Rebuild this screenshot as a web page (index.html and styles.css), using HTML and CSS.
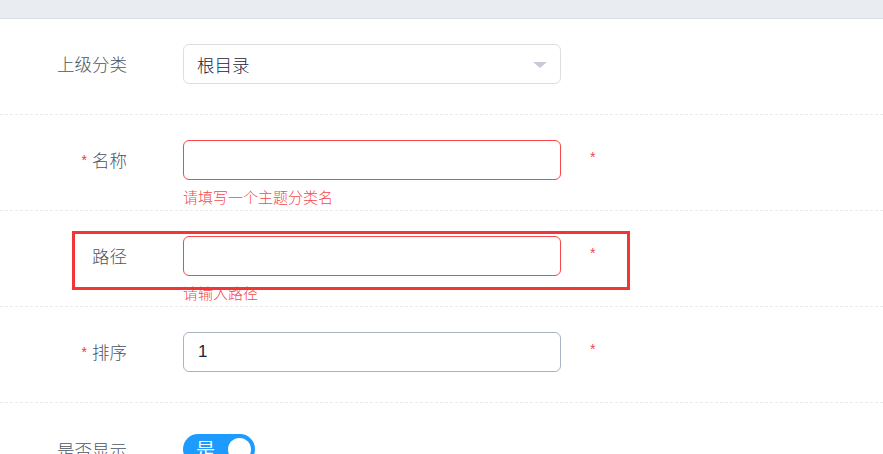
FILE: index.html
```html
<!DOCTYPE html>
<html lang="zh">
<head>
<meta charset="utf-8">
<link rel="stylesheet" href="styles.css">
</head>
<body>
<div class="topbar"></div>
<form class="form">
  <div class="row">
    <label class="label">上级分类</label>
    <div class="control">
      <div class="select">
        <span class="select-value">根目录</span>
        <span class="arrow"></span>
      </div>
    </div>
  </div>
  <div class="row">
    <label class="label"><span class="req">*</span>名称</label>
    <div class="control">
      <div class="field">
        <div class="input error"></div>
        <span class="star">*</span>
      </div>
      <div class="tip">请填写一个主题分类名</div>
    </div>
  </div>
  <div class="row highlight-row">
    <label class="label">路径</label>
    <div class="control">
      <div class="field">
        <div class="input error"></div>
        <span class="star">*</span>
      </div>
      <div class="tip">请输入路径</div>
    </div>
    <div class="highlight"></div>
  </div>
  <div class="row">
    <label class="label"><span class="req">*</span>排序</label>
    <div class="control">
      <div class="field">
        <div class="input hover">1</div>
        <span class="star">*</span>
      </div>
    </div>
  </div>
  <div class="row last">
    <label class="label">是否显示</label>
    <div class="control">
      <div class="switch"><span class="switch-text">是</span><span class="knob"></span></div>
    </div>
  </div>
</form>
</body>
</html>
```
FILE: styles.css
```css
* { box-sizing: border-box; }
html, body { margin: 0; padding: 0; background: #fff; }
body {
  font-family: "Noto Sans CJK SC", "Noto Sans", sans-serif;
  color: #495060;
  overflow: hidden;
  height: 454px;
}
.topbar {
  height: 19px;
  background: #e9edf1;
  border-bottom: 1px solid #d9e0e7;
}
.form { margin: 0; }
.row {
  display: flex;
  align-items: flex-start;
  height: 96px;
  padding-top: 25px;
  border-bottom: 1px dashed #e9eaec;
}
.row.last { border-bottom: none; padding-top: 31px; }
.highlight-row { position: relative; }
.label {
  width: 127px;
  flex: none;
  text-align: right;
  font-size: 17.5px;
  font-weight: 300;
  line-height: 40px;
  height: 40px;
  color: #4b5563;
}
.row.last .label { line-height: 32px; height: 32px; }
.req {
  color: #ed4014;
  font-size: 14px;
  margin-right: 5px;
  font-family: "Liberation Sans", sans-serif;
  vertical-align: 2px;
}
.control { margin-left: 56px; }
.field { display: flex; align-items: center; }
.select, .input {
  width: 378px;
  height: 40px;
  border: 1px solid #dcdee2;
  border-radius: 6px;
  background: #fff;
}
.select {
  display: flex;
  align-items: center;
  justify-content: space-between;
  padding: 0 13px 0 13px;
}
.select-value { font-size: 17.5px; font-weight: 300; color: #1c2438; }
.arrow {
  width: 0; height: 0;
  border-left: 7px solid transparent;
  border-right: 7px solid transparent;
  border-top: 6px solid #c5cbd6;
  margin-top: 1px;
}
.input {
  padding: 0 14px;
  font-size: 17px;
  line-height: 38px;
  color: #1c2438;
  font-family: "Liberation Sans", sans-serif;
}
.input.error { border-color: #f5484b; }
.input.hover { border-color: #aab3c4; }
.star {
  color: #f5484b;
  font-size: 14px;
  font-family: "Liberation Sans", sans-serif;
  margin-left: 29px;
  margin-top: -6px;
}
.tip {
  margin-top: 7px;
  font-size: 15px;
  font-weight: 300;
  line-height: 20px;
  color: #f5484b;
}
.highlight {
  position: absolute;
  left: 72px;
  top: 20px;
  width: 558px;
  height: 59px;
  border: 3px solid #f23535;
}
.switch {
  width: 72px;
  height: 30px;
  border-radius: 15px;
  background: #1e9bff;
  display: flex;
  align-items: center;
  justify-content: space-between;
  padding: 0 4px 0 13px;
}
.switch-text { color: #fff; font-size: 19px; line-height: 30px; }
.knob {
  width: 23px; height: 23px;
  border-radius: 50%;
  background: #fff;
}
```
